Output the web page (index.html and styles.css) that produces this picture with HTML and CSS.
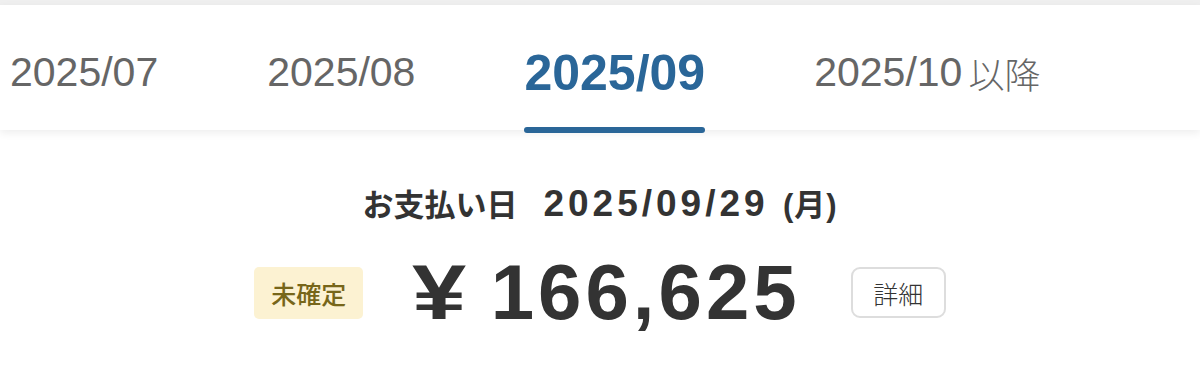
FILE: index.html
```html
<!DOCTYPE html>
<html lang="ja">
<head>
    <meta charset="UTF-8">
    <meta name="viewport" content="width=device-width, initial-scale=1.0">
    <title>お支払い</title>
    <link rel="stylesheet" href="styles.css">
</head>
<body>
    <div class='top-strip'></div>
    <ul class='tabs'>
        <li class='tab'>2025/07</li>
        <li class='tab'>2025/08</li>
        <li class='tab active'>2025/09</li>
        <li class='tab'>2025/10<span class='tab-suffix'>以降</span></li>
    </ul>
    <div class='summary'>
        <p class='pay-date'>
            <span class='pay-label'>お支払い日</span>
            <span class='pay-value'>2025/09/29 <span class='dow'>(月)</span></span>
        </p>
        <div class='amount-row'>
            <span class='badge'>未確定</span>
            <span class='amount'><span class='yen'>¥</span>166,625</span>
            <button class='detail-btn' type='button'>詳細</button>
        </div>
    </div>
</body>
</html>
```

FILE: styles.css
```css
html, body {
    margin: 0;
    padding: 0;
    background: #fff;
}
body {
    font-family: "Liberation Sans", "Noto Sans CJK JP", sans-serif;
    color: #333;
}
ul, li, p {
    margin: 0;
    padding: 0;
    list-style: none;
}
.top-strip {
    height: 5px;
    background: #efefef;
}
.tabs {
    display: flex;
    gap: 109px;
    height: 125px;
    padding-left: 10px;
    white-space: nowrap;
    background: #fff;
    box-shadow: 0 3px 8px rgba(0, 0, 0, 0.07);
    position: relative;
}
.tab {
    position: relative;
    display: flex;
    align-items: center;
    padding-top: 10px;
    font-size: 41px;
    color: #666;
}
.tab-suffix {
    margin-left: 6px;
    font-size: 36px;
    font-weight: 300;
}
.tab.active {
    font-size: 50px;
    font-weight: bold;
    color: #2a6698;
}
.tab.active::after {
    content: '';
    position: absolute;
    left: 0;
    right: 0;
    bottom: -3px;
    height: 6px;
    border-radius: 3px;
    background: #2a6698;
}
.summary {
    padding-top: 50px;
    text-align: center;
}
.pay-date {
    display: flex;
    justify-content: center;
    align-items: baseline;
    gap: 26px;
    font-weight: bold;
}
.pay-label {
    font-size: 31px;
}
.pay-value {
    font-size: 37px;
    letter-spacing: 4px;
}
.dow {
    font-size: 31px;
    letter-spacing: 1px;
}
.amount-row {
    display: flex;
    justify-content: center;
    align-items: center;
    margin-top: 22px;
}
.badge {
    padding: 8px 17px;
    border-radius: 5px;
    background: #fcf2d2;
    color: #776619;
    font-size: 25px;
    font-weight: 500;
}
.amount {
    margin: 0 50px 0 55px;
    font-size: 78px;
    font-weight: bold;
    letter-spacing: 4px;
}
.yen {
    display: inline-block;
    margin-right: 25px;
    transform: scaleX(1.25);
}
.detail-btn {
    width: 95px;
    height: 51px;
    padding: 0;
    border: 2px solid #ddd;
    border-radius: 9px;
    background: #fff;
    color: #333;
    font-family: inherit;
    font-size: 25px;
    font-weight: 300;
}
```
